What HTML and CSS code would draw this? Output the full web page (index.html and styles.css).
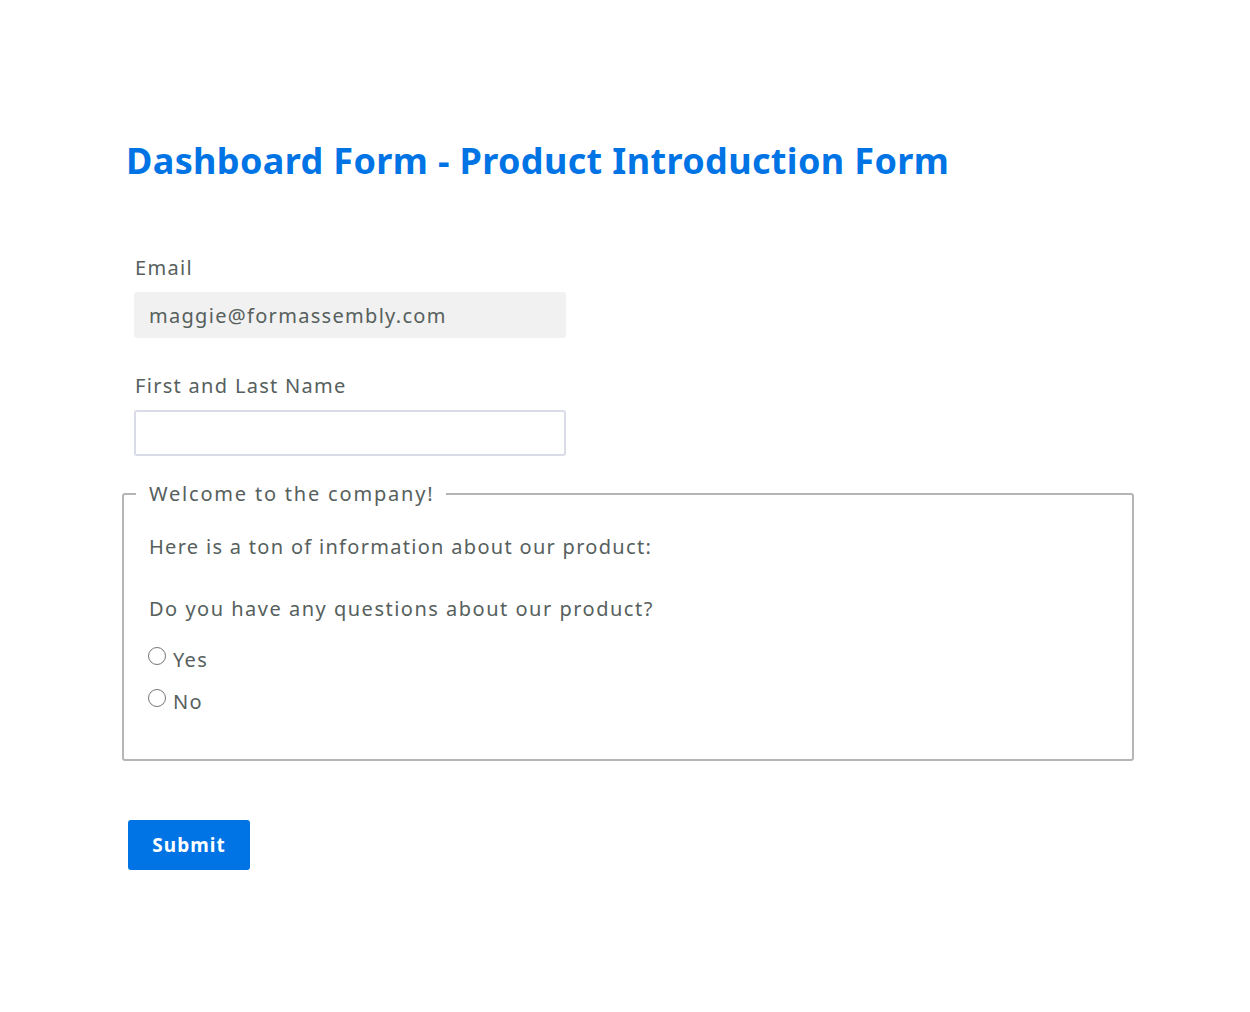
FILE: index.html
```html
<!DOCTYPE html>
<html lang="en">
<head>
<meta charset="utf-8">
<title>Dashboard Form - Product Introduction Form</title>
<link rel="stylesheet" href="styles.css">
</head>
<body>
<main class="page">
  <h1 class="title">Dashboard Form - Product Introduction Form</h1>
  <form class="form">
    <div class="field">
      <label class="label" for="email">Email</label>
      <input class="input input-readonly" id="email" type="text" value="maggie@formassembly.com" readonly>
    </div>
    <div class="field">
      <label class="label" for="name">First and Last Name</label>
      <input class="input" id="name" type="text">
    </div>
    <fieldset class="section">
      <legend class="legend">Welcome to the company!</legend>
      <div class="section-body">
        <p class="info">Here is a ton of information about our product:</p>
        <p class="question">Do you have any questions about our product?</p>
        <label class="choice"><input class="radio" type="radio" name="q"><span>Yes</span></label>
        <label class="choice"><input class="radio" type="radio" name="q"><span>No</span></label>
      </div>
    </fieldset>
    <div class="actions">
      <button class="submit" type="button">Submit</button>
    </div>
  </form>
</main>
</body>
</html>
```
FILE: styles.css
```css
* { box-sizing: border-box; }
html, body { margin: 0; padding: 0; background: #ffffff; }
body {
  font-family: "Noto Sans", "Open Sans", sans-serif;
  color: #56605d;
}
.page {
  padding: 136px 0 0 126px;
  width: 1250px;
}
.title {
  margin: 0;
  font-size: 36px;
  line-height: 50px;
  font-weight: 700;
  color: #0074e4;
  letter-spacing: 0.36px;
}
.form {
  margin-top: 68px;
  width: 1008px;
}
.field {
  padding-left: 8px;
}
.field + .field {
  margin-top: 34px;
}
.label {
  display: block;
  font-size: 20px;
  line-height: 28px;
  margin-bottom: 10px;
  padding-left: 1px;
  letter-spacing: 1.3px;
}
.input {
  display: block;
  width: 432px;
  height: 46px;
  border: 2px solid #d9dbe7;
  border-radius: 3px;
  background: #ffffff;
  font-family: inherit;
  font-size: 20px;
  letter-spacing: 1.3px;
  color: #56605d;
  padding: 0 13px;
  margin: 0;
  outline: none;
}
.input-readonly {
  background: #f1f1f1;
  border-color: #f1f1f1;
}
.section {
  margin: 24px 0 0 -4px;
  width: 1012px;
  border: 2px solid #b5b5b5;
  border-radius: 3px;
  padding: 0 12px 36px 12px;
}
.legend {
  padding: 0 12px 0 13px;
  font-size: 20px;
  line-height: 28px;
  letter-spacing: 1.8px;
}
.section-body {
  padding-left: 13px;
}
.info, .question {
  margin: 0;
  font-size: 20px;
  line-height: 28px;
  letter-spacing: 1.3px;
}
.info { margin-top: 25px; }
.question { margin-top: 34px; margin-bottom: 16px; letter-spacing: 1.5px; }
.choice {
  display: flex;
  align-items: center;
  font-size: 20px;
  letter-spacing: 1.3px;
  line-height: 42px;
  height: 42px;
}
.radio {
  margin: -9px 7px 0 -1px;
  width: 18px;
  height: 18px;
}
.actions {
  margin-top: 59px;
  padding-left: 2px;
}
.submit {
  width: 122px;
  height: 50px;
  border: none;
  border-radius: 3px;
  background: #0074e4;
  color: #ffffff;
  font-family: inherit;
  font-weight: 700;
  font-size: 19px;
  letter-spacing: 1px;
  padding: 0;
}
```
